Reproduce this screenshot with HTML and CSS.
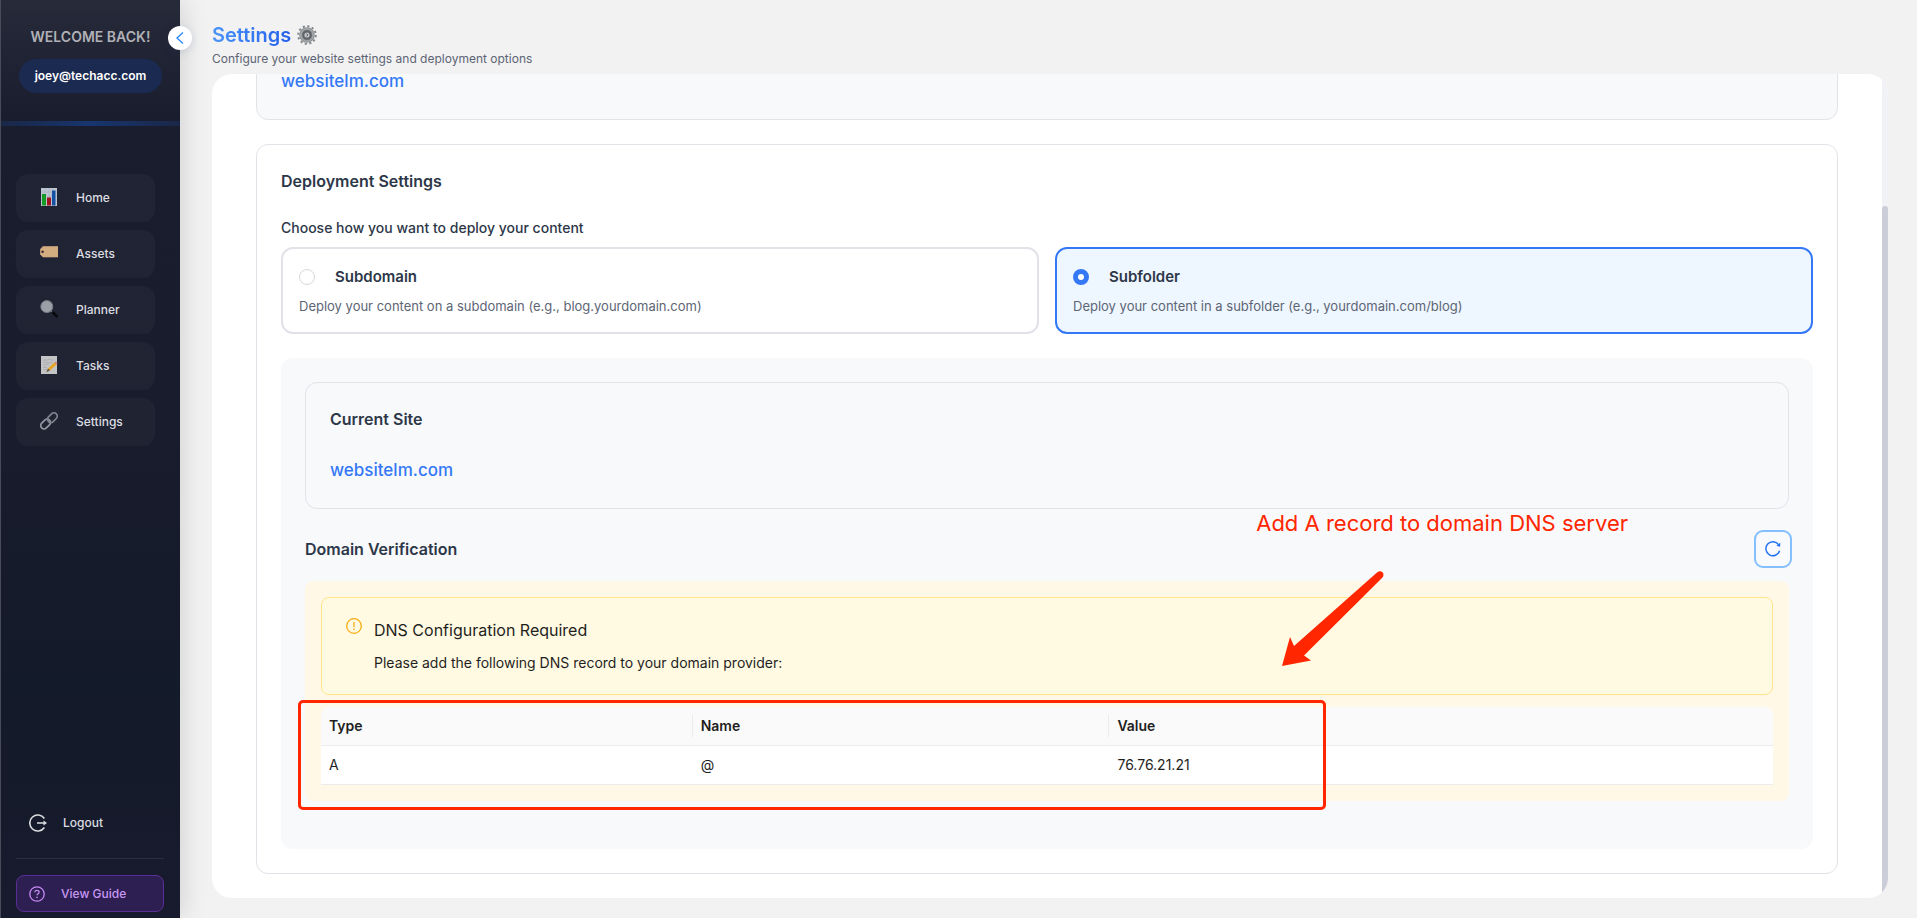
FILE: index.html
```html
<!DOCTYPE html>
<html lang="en">
<head>
<meta charset="utf-8">
<title>Settings</title>
<link rel="stylesheet" href="styles.css">
</head>
<body>
<div class="app">
  <aside class="sidebar">
    <div class="profile">
      <p class="welcome">WELCOME BACK!</p>
      <span class="email">joey@techacc.com</span>
    </div>
    <button class="collapse" type="button" aria-label="Collapse sidebar">
      <svg width="14" height="14" viewBox="0 0 14 14" fill="none" stroke="#2f8bfb" stroke-width="1.4"><path d="M10 1.500 4 7l6 5.500"/></svg>
    </button>
    <nav class="menu">
      <a class="item" href="#home">
        <svg class="emoji" viewBox="0 0 18 18"><rect x="1" y="0" width="16" height="18" fill="#bcc5d0"/><path d="M1 4h16M1 8h16M1 12h16M5 0v18M9 0v18M13 0v18" stroke="#a3afbd" stroke-width=".5"/><rect x="2" y="6" width="4" height="11.500" fill="#159c24"/><rect x="7" y="9.500" width="4" height="8" fill="#a01220"/><rect x="12" y="2.500" width="3.500" height="15" fill="#1550a5"/></svg>
        Home</a>
      <a class="item" href="#assets">
        <svg class="emoji" viewBox="0 0 18 18"><path d="M3 2.500h15v10.500H3L.3 10.200V5.200z" fill="#d3ac80" stroke="#d3ac80" stroke-width=".6" stroke-linejoin="round"/><circle cx="2.600" cy="7.700" r="1.300" fill="#3a2b35"/></svg>
        Assets</a>
      <a class="item" href="#planner">
        <svg class="emoji" viewBox="0 0 18 18"><path d="m10.500 10.500 2 2" stroke="#6f747b" stroke-width="1.500"/><path d="m13 12.800 3.500 3.200" stroke="#090a0d" stroke-width="2.800" stroke-linecap="round"/><circle cx="6.800" cy="6.600" r="6" fill="#9ba0a8" stroke="#747a84" stroke-width="1"/></svg>
        Planner</a>
      <a class="item" href="#tasks">
        <svg class="emoji" viewBox="0 0 18 18"><rect x="1" y="0" width="16" height="18" fill="#c4c4c6"/><path d="M3 4h5l1-1 2 1h3M3 6.500l2-.6 1 .8h6M3 9h3l1-.8 2 .8M3 11.500h4M3 14l2-.6h2" stroke="#a4a5a9" stroke-width=".7" fill="none"/><path d="m8 12.500 6.500-6.200 2 2.300-6.500 6z" fill="#e5a521"/><path d="m14.500 6.300 1-.9 2.200 2.100-1.200 1.100z" fill="#cc767b"/><path d="m8 12.500-1.800 3.700 3.800-1.600z" fill="#6a5436"/></svg>
        Tasks</a>
      <a class="item" href="#settings">
        <svg class="emoji" viewBox="0 0 18 18" fill="none" stroke-width="1.700"><rect x="-5.500" y="-3.300" width="11" height="6.600" rx="3.300" transform="translate(5.600 12) rotate(-45)" stroke="#9299a2"/><rect x="-5.500" y="-3.300" width="11" height="6.600" rx="3.300" transform="translate(12.400 5.700) rotate(-45)" stroke="#7d848e"/></svg>
        Settings</a>
    </nav>
    <div class="bottom">
      <button class="logout" type="button">
        <svg width="18" height="18" viewBox="0 0 18 18" fill="none" stroke="#dcdde0" stroke-width="1.600"><path d="M15.400 4.500a8 8 0 1 0 0 9M8 9h8"/><path d="m14.500 6.500 3.500 2.500-3.500 2.500z" fill="#dcdde0" stroke="none"/></svg>
        Logout
      </button>
      <button class="guide" type="button">
        <svg width="16" height="16" viewBox="0 0 16 16" fill="none" stroke="#c78af5" stroke-width="1.300"><circle cx="8" cy="8" r="7.200"/><path d="M5.900 6.300c0-1.200.9-2 2.100-2s2.100.8 2.100 1.900c0 1.500-2.100 1.500-2.100 3.100"/><circle cx="8" cy="11.400" r=".8" fill="#c78af5" stroke="none"/></svg>
        View Guide
      </button>
    </div>
  </aside>

  <main class="main">
    <header class="page-head">
      <h1 class="page-title"><span class="title-text">Settings</span>
        <svg width="20" height="20" viewBox="0 0 20 20"><circle cx="10" cy="10" r="8.800" fill="none" stroke="#86898c" stroke-width="2" stroke-dasharray="2.200 2.408"/><circle cx="10" cy="10" r="6.300" fill="#606468" stroke="#8b8f92" stroke-width="3"/><circle cx="10" cy="10" r="6.200" fill="none" stroke="#b3b6b8" stroke-width="1"/><circle cx="10" cy="10" r="2.600" fill="#c2c5c7"/><path d="m9.500 8.800 1.400 1.200-1.400 1.200" fill="none" stroke="#4e5255" stroke-width=".9"/></svg>
      </h1>
      <p class="page-sub">Configure your website settings and deployment options</p>
    </header>

    <div class="sheet">
      <div class="viewport">
        <section class="site-card">
          <h2 class="heading">Current Site</h2>
          <a class="site-link" href="#site">websitelm.com</a>
        </section>
        <section class="deploy-card">
          <h2 class="heading">Deployment Settings</h2>
          <fieldset class="choices">
            <legend class="legend">Choose how you want to deploy your content</legend>
            <label class="choice">
              <span class="choice-row"><input class="radio" type="radio" name="mode">Subdomain</span>
              <span class="choice-note">Deploy your content on a subdomain (e.g., blog.yourdomain.com)</span>
            </label>
            <label class="choice selected">
              <span class="choice-row"><input class="radio" type="radio" name="mode" checked>Subfolder</span>
              <span class="choice-note">Deploy your content in a subfolder (e.g., yourdomain.com/blog)</span>
            </label>
          </fieldset>
          <div class="panel">
            <section class="site-card">
              <h2 class="heading">Current Site</h2>
              <a class="site-link" href="#site">websitelm.com</a>
            </section>
            <div class="verify-head">
              <h2 class="heading">Domain Verification</h2>
              <button class="refresh" type="button" aria-label="Refresh">
                <svg width="16" height="16" viewBox="0 0 16 16" fill="none" stroke="#1f6ff5" stroke-width="1.400"><path d="M14.600 9.800A7 7 0 1 1 13.600 3.700"/><path d="m15.300 1.800-.2 4-3.700-1.100z" fill="#1f6ff5" stroke="none"/></svg>
              </button>
              <p class="callout">Add A record to domain DNS server</p>
              <svg class="arrow" width="104" height="98" viewBox="0 0 104 98"><path d="M1 97 9 68l4 9L96 3.500c4-3.500 9 1 5 5.500L23 86.500l7 5z" fill="#ff2600"/></svg>
            </div>
            <div class="verify-body">
              <div class="alert" role="alert">
                <svg width="16" height="16" viewBox="0 0 16 16" fill="none" stroke="#faad14" stroke-width="1.300"><circle cx="8" cy="8" r="7.300"/><path d="M8 4v5.200"/><circle cx="8" cy="11.400" r=".8" fill="#faad14" stroke="none"/></svg>
                <div class="alert-text">
                  <p class="alert-title">DNS Configuration Required</p>
                  <p class="alert-note">Please add the following DNS record to your domain provider:</p>
                </div>
              </div>
              <div class="records-wrap">
                <table class="records">
                  <thead><tr><th class="col-type">Type</th><th class="col-name">Name</th><th>Value</th></tr></thead>
                  <tbody><tr><td>A</td><td>@</td><td>76.76.21.21</td></tr></tbody>
                </table>
                <div class="highlight"></div>
              </div>
            </div>
          </div>
        </section>
      </div>
      <div class="track"><div class="thumb"></div></div>
    </div>
  </main>
</div>
</body>
</html>
```
FILE: styles.css
```css
* { box-sizing: border-box; margin: 0; }
body { background: #f2f2f2; font-family: Inter, "Liberation Sans", sans-serif; font-size: 14px; line-height: 22px; color: #2d3748; }
button { font: inherit; cursor: pointer; }
a { text-decoration: none; }
svg { flex: none; display: block; }

.app { display: flex; height: 100vh; }

.sidebar { position: relative; z-index: 1; flex: none; width: 180px; display: flex; flex-direction: column; border-left: 1px solid #484b58; background: linear-gradient(180deg, #1a1d2e 0%, #181c2c 50%, #131a29 75%, #181b2e 100%); box-shadow: 4px 0 24px rgba(0, 0, 0, .12); }
.profile { height: 126px; display: flex; flex-direction: column; align-items: center; gap: 11px; padding-top: 26px; background: linear-gradient(90deg, #1a2747, #17356f 50%, #1a2747) bottom / 100% 5px no-repeat, linear-gradient(180deg, #272a39, #191c2d); }
.welcome { font-size: 14px; font-weight: 600; color: #b0b1b7; }
.email { padding: 6px 16px; border-radius: 20px; background: #1b2a50; color: #fff; font-size: 12px; font-weight: 600; }
.collapse { position: absolute; top: 26px; right: -12px; width: 24px; height: 24px; padding: 0; border: 0; border-radius: 50%; background: #fff; box-shadow: 0 2px 8px rgba(30, 60, 120, .15); display: grid; place-items: center; }
.menu { display: flex; flex-direction: column; gap: 8px; padding: 48px 25px 0 15px; }
.item { height: 48px; display: flex; align-items: center; gap: 18px; padding: 0 24px; border-radius: 12px; background: rgba(255, 255, 255, .03); color: #dcdde1; font-size: 12px; font-weight: 500; }
.emoji { width: 18px; height: 18px; margin-bottom: 2px; }
.bottom { margin-top: auto; padding: 0 16px 6px 15px; }
.logout { width: 100%; display: flex; align-items: center; gap: 16px; padding: 24px 13px; border: 0; border-bottom: 1px solid #2b2e3e; background: none; color: #dcdde0; font-size: 12px; font-weight: 500; margin-bottom: 16px; }
.guide { width: 100%; height: 37px; display: flex; align-items: center; gap: 16px; padding: 0 12px; border: 1px solid #5a2e96; border-radius: 8px; background: #2e1f52; color: #c997f5; font-size: 12px; font-weight: 500; }

.main { flex: 1; min-width: 0; display: flex; flex-direction: column; padding: 20px 29px 20px 32px; }
.page-head { height: 54px; flex: none; }
.page-title { display: flex; align-items: center; gap: 6px; height: 30px; font-size: 20px; line-height: 30px; font-weight: 600; }
.title-text { background: linear-gradient(90deg, #4a94fb, #2460ea); background-clip: text; -webkit-background-clip: text; color: transparent; }
.page-sub { font-size: 12px; line-height: 18px; color: #5c6474; }

.sheet { flex: 1; min-height: 0; display: flex; overflow: hidden; border-radius: 20px; background: #fff; }
.viewport { flex: 1; min-width: 0; display: flex; flex-direction: column; justify-content: flex-end; gap: 24px; overflow: hidden; padding: 0 44px 24px; }
.track { width: 6px; background: #f1f2f6; }
.thumb { height: 84%; margin-top: 132px; border-radius: 3px; background: #cbced8; }

.heading { font-size: 16px; line-height: 24px; font-weight: 600; color: #2d3748; }
.site-card { flex: none; display: flex; flex-direction: column; align-items: flex-start; gap: 25px; padding: 24px; border: 1px solid #e1e3e9; border-radius: 12px; background: #f8f9fb; }
.site-link { font-size: 17px; line-height: 28px; font-weight: 500; color: #3478f6; }
.deploy-card { flex: none; padding: 24px; border: 1px solid #e1e2e8; border-radius: 12px; background: #fff; }

.choices { display: grid; grid-template-columns: 1fr 1fr; gap: 16px; padding: 0; border: 0; margin: 24px 0; }
.legend { padding: 0 0 8px; font-weight: 500; }
.choice { display: flex; flex-direction: column; gap: 8px; padding: 16px; border: 2px solid #e1e2e8; border-radius: 12px; }
.selected { border-color: #3478f6; background: #eef6ff; }
.choice-row { display: flex; align-items: center; gap: 20px; font-size: 15px; line-height: 23px; font-weight: 600; }
.choice-note { font-size: 13px; line-height: 20px; color: #5d6575; }
.radio { appearance: none; flex: none; margin: 0; width: 16px; height: 16px; border: 1px solid #d9d9d9; border-radius: 50%; background: #fff; }
.radio:checked { border: 5px solid #3478f6; }

.panel { padding: 24px 24px 48px; border-radius: 12px; background: #f8f9fb; }
.verify-head { position: relative; display: flex; align-items: center; justify-content: space-between; margin: 24px 0 16px; }
.refresh { width: 32px; height: 32px; padding: 0; border: 0; border-radius: 6px; background: #f8fafd; outline: 2px solid #84c0ff; outline-offset: 1px; display: grid; place-items: center; }
.callout { position: absolute; right: 161px; top: -26px; font-size: 22px; line-height: 32px; color: #ff2600; white-space: nowrap; }
.arrow { position: absolute; right: 404px; top: 36px; z-index: 1; }

.verify-body { display: flex; flex-direction: column; gap: 12px; padding: 16px; border-radius: 8px; background: #fff8e6; color: #1f1f1f; }
.alert { display: flex; gap: 12px; padding: 20px 24px; border: 1px solid #ffe48a; border-radius: 8px; background: #fffae1; }
.alert-text { display: flex; flex-direction: column; gap: 10px; }
.alert-title { font-size: 16px; line-height: 24px; }
.records-wrap { position: relative; }
.records { width: 100%; table-layout: fixed; border-collapse: separate; border-spacing: 0; }
.records th, .records td { padding: 8px; text-align: left; border-bottom: 1px solid #ececee; background: #fff; }
.records th { background: #fafafa; font-weight: 600; }
.records th:not(:last-child) { background: linear-gradient(#ececee, #ececee) right center / 1px 22px no-repeat #fafafa; }
.records th:first-child { border-top-left-radius: 8px; }
.records th:last-child { border-top-right-radius: 8px; }
.col-type { width: 25.6%; }
.col-name { width: 28.7%; }
.highlight { position: absolute; left: -23px; top: -7px; bottom: -25px; width: 70.8%; border: 3px solid #ff2600; border-radius: 5px; }
```
